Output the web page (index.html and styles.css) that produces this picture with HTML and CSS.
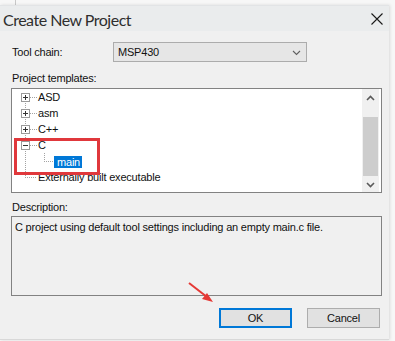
FILE: index.html
```html
<!DOCTYPE html>
<html>
<head>
<meta charset="utf-8">
<link rel="stylesheet" href="styles.css">
</head>
<body>
<div class="page">
  <div class="backdrop"></div>
  <div class="window">
    <div class="titlebar">
      <span class="title">Create New Project</span>
      <svg class="close" width="12" height="12" viewBox="0 0 12 12"><path d="M0.5 0.5L11.5 11.5M11.5 0.5L0.5 11.5" stroke="#1a1a1a" stroke-width="1.1" fill="none"/></svg>
    </div>
    <div class="content">
      <div class="field-row">
        <span class="label toolchain-label">Tool chain:</span>
        <div class="select">
          <span class="select-text">MSP430</span>
          <svg class="chev" width="9" height="6" viewBox="0 0 9 6"><path d="M1 1L4.5 4.5L8 1" stroke="#606060" stroke-width="1.1" fill="none"/></svg>
        </div>
      </div>
      <div class="label section-label">Project templates:</div>
      <div class="tree">
        <div class="tree-list">
          <div class="row">
            <span class="gutter line-half-bottom"><span class="ebox"><svg width="9" height="9" viewBox="0 0 9 9"><rect x="0.5" y="0.5" width="8" height="8" fill="#fff" stroke="#9a9a9a"/><path d="M2 4.5H7M4.5 2V7" stroke="#333" stroke-width="1"/></svg></span></span>
            <span class="item">ASD</span>
          </div>
          <div class="row">
            <span class="gutter line-full"><span class="ebox"><svg width="9" height="9" viewBox="0 0 9 9"><rect x="0.5" y="0.5" width="8" height="8" fill="#fff" stroke="#9a9a9a"/><path d="M2 4.5H7M4.5 2V7" stroke="#333" stroke-width="1"/></svg></span></span>
            <span class="item">asm</span>
          </div>
          <div class="row">
            <span class="gutter line-full"><span class="ebox"><svg width="9" height="9" viewBox="0 0 9 9"><rect x="0.5" y="0.5" width="8" height="8" fill="#fff" stroke="#9a9a9a"/><path d="M2 4.5H7M4.5 2V7" stroke="#333" stroke-width="1"/></svg></span></span>
            <span class="item">C++</span>
          </div>
          <div class="row">
            <span class="gutter line-full"><span class="ebox"><svg width="9" height="9" viewBox="0 0 9 9"><rect x="0.5" y="0.5" width="8" height="8" fill="#fff" stroke="#9a9a9a"/><path d="M2 4.5H7" stroke="#333" stroke-width="1"/></svg></span></span>
            <span class="item">C</span>
          </div>
          <div class="row">
            <span class="gutter line-through"></span>
            <span class="gutter2 line-half-top"></span>
            <span class="item selected">main</span>
          </div>
          <div class="row">
            <span class="gutter line-half-top"></span>
            <span class="item">Externally built executable</span>
          </div>
        </div>
        <div class="scrollbar">
          <div class="sb-btn"><svg width="9" height="6" viewBox="0 0 9 6"><path d="M1 5L4.5 1.5L8 5" stroke="#5a5a5a" stroke-width="1.6" fill="none"/></svg></div>
          <div class="sb-track-top"></div>
          <div class="sb-thumb"></div>
          <div class="sb-btn"><svg width="9" height="6" viewBox="0 0 9 6"><path d="M1 1L4.5 4.5L8 1" stroke="#5a5a5a" stroke-width="1.6" fill="none"/></svg></div>
        </div>
      </div>
      <div class="label desc-label">Description:</div>
      <div class="desc">C project using default tool settings including an empty main.c file.</div>
      <div class="buttons">
        <button class="btn default">OK</button>
        <button class="btn">Cancel</button>
      </div>
    </div>
  </div>
  <div class="annot-box"></div>
  <svg class="annot-arrow" width="30" height="26" viewBox="0 0 30 26">
    <path d="M1 1L19 15" stroke="#e53935" stroke-width="2" fill="none"/>
    <path d="M25 20L14 17L19 11Z" fill="#e53935"/>
  </svg>
</div>
</body>
</html>
```

FILE: styles.css
```css
* { box-sizing: border-box; }
html, body { margin: 0; padding: 0; }
body {
  background: #f7f7f7;
  width: 395px;
  height: 341px;
  overflow: hidden;
  font-family: "Liberation Sans", Arial, sans-serif;
  font-size: 11px;
  letter-spacing: -0.2px;
  color: #111;
}
.page { position: relative; width: 395px; height: 341px; }
.backdrop {
  height: 5px;
  margin-left: 15px;
  border-left: 1px solid #c8c8c8;
}
.window {
  width: 389px;
  height: 335px;
  background: #f0f0f0;
  box-shadow: 1px 0 3px rgba(0,0,0,0.12);
  border-bottom: 1px solid #d8d8d8;
}
.titlebar {
  height: 26px;
  background: #eaeced;
  display: flex;
  align-items: center;
  justify-content: space-between;
  padding: 0 6px 0 3px;
  border-top: 1px solid #e2e4e6;
}
.title {
  font-family: Lato, "Open Sans", sans-serif;
  font-size: 16px;
  letter-spacing: -0.5px;
  color: #2e2e2e;
  margin-top: 2px;
}
.close { margin-top: 1px; }
.content { padding: 11px 7px 0 11px; }
.field-row { display: flex; align-items: center; height: 20px; }
.label { display: block; line-height: 14px; }
.toolchain-label { width: 102px; padding-left: 1px; }
.select {
  width: 194px;
  height: 20px;
  background: #e6e6e6;
  border: 1px solid #acacac;
  display: flex;
  align-items: center;
  justify-content: space-between;
  padding: 0 5px 0 4px;
}
.chev { margin-top: 1px; }
.section-label { margin-top: 9px; padding-left: 1px; }
.tree {
  margin-top: 3px;
  width: 371px;
  height: 105px;
  background: #fff;
  border: 1px solid #828282;
  display: flex;
}
.tree-list { flex: 1; padding-left: 9px; }
.row { display: flex; height: 16px; align-items: center; }
.gutter, .gutter2 {
  width: 16px;
  height: 16px;
  flex: none;
  display: flex;
  align-items: center;
  background-repeat: no-repeat;
}
.gutter2 { width: 17px; }
.line-full {
  background-image:
    repeating-linear-gradient(to bottom, #a3a3a3 0 1px, transparent 1px 2px),
    repeating-linear-gradient(to right, #a3a3a3 0 1px, transparent 1px 2px);
  background-size: 1px 16px, 7px 1px;
  background-position: 4px 0, 9px 8px;
}
.line-half-bottom {
  background-image:
    repeating-linear-gradient(to bottom, #a3a3a3 0 1px, transparent 1px 2px),
    repeating-linear-gradient(to right, #a3a3a3 0 1px, transparent 1px 2px);
  background-size: 1px 8px, 7px 1px;
  background-position: 4px 8px, 9px 8px;
}
.line-through {
  background-image: repeating-linear-gradient(to bottom, #a3a3a3 0 1px, transparent 1px 2px);
  background-size: 1px 16px;
  background-position: 4px 0;
}
.gutter.line-half-top {
  background-image:
    repeating-linear-gradient(to bottom, #a3a3a3 0 1px, transparent 1px 2px),
    repeating-linear-gradient(to right, #a3a3a3 0 1px, transparent 1px 2px);
  background-size: 1px 9px, 11px 1px;
  background-position: 4px 0, 4px 8px;
}
.gutter2.line-half-top {
  background-image:
    repeating-linear-gradient(to bottom, #a3a3a3 0 1px, transparent 1px 2px),
    repeating-linear-gradient(to right, #a3a3a3 0 1px, transparent 1px 2px);
  background-size: 1px 9px, 10px 1px;
  background-position: 7px 0, 7px 8px;
}
.ebox { width: 9px; height: 9px; display: block; line-height: 0; margin-top: 1px; }
.item { line-height: 14px; white-space: nowrap; padding-left: 1px; }
.selected {
  background: #0078d7;
  color: #fff;
  padding: 0 2px 0 3px;
  line-height: 12px;
  margin-top: 2px;
}
.scrollbar {
  width: 17px;
  margin-right: 2px;
  background: #f0f0f0;
  display: flex;
  flex-direction: column;
}
.sb-btn { height: 17px; display: flex; align-items: center; justify-content: center; flex: none; }
.sb-track-top { height: 11px; flex: none; }
.sb-thumb { height: 59px; background: #cdcdcd; flex: none; margin: 0 1px; }
.desc-label { margin-top: 7px; padding-left: 1px; }
.desc {
  margin-top: 2px;
  width: 371px;
  height: 80px;
  border: 1px solid #828282;
  background: #f0f0f0;
  padding: 3px 3px;
  line-height: 14px;
}
.buttons {
  display: flex;
  justify-content: flex-end;
  gap: 15px;
  margin-top: 12px;
  padding-right: 2px;
}
.btn {
  width: 73px;
  height: 20px;
  font-family: "Liberation Sans", Arial, sans-serif;
  font-size: 11px;
  letter-spacing: -0.2px;
  color: #111;
  background: #e1e1e1;
  border: 1px solid #adadad;
  padding: 0;
}
.btn.default { border: 2px solid #0078d7; }
.annot-box {
  position: absolute;
  left: 14px;
  top: 138px;
  width: 86px;
  height: 37px;
  border: 3px solid #e0383c;
}
.annot-arrow {
  position: absolute;
  left: 188px;
  top: 282px;
}
```
